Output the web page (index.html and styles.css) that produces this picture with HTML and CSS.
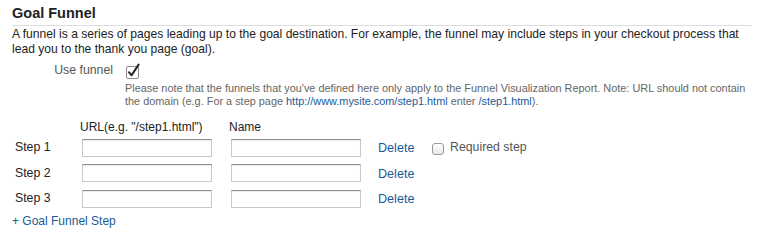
FILE: index.html
```html
<!DOCTYPE html>
<html>
<head>
<meta charset="utf-8">
<link rel="stylesheet" href="styles.css">
</head>
<body>
<div class="panel">
  <h2 class="title">Goal Funnel</h2>
  <p class="desc">A funnel is a series of pages leading up to the goal destination. For example, the funnel may include steps in your checkout process that lead you to the thank you page (goal).</p>
  <div class="use-row">
    <span class="use-label">Use funnel</span>
    <span class="check">
      <svg width="15" height="16" viewBox="0 0 15 16">
        <rect x="0.5" y="3.5" width="12" height="12" rx="1.5" fill="#fff" stroke="#8a8a8a"/>
        <path d="M3 9.2 L5.6 12.3 L12.6 1.6" fill="none" stroke="#222" stroke-width="2" stroke-linecap="round" stroke-linejoin="round"/>
      </svg>
    </span>
  </div>
  <p class="note">Please note that the funnels that you've defined here only apply to the Funnel Visualization Report. Note: URL should not contain the domain (e.g. For a step page <a>http://www.mysite.com/step1.html</a> enter <a>/step1.html</a>).</p>
  <div class="steps">
    <span></span><span class="colhead">URL(e.g. "/step1.html")</span><span class="colhead">Name</span><span></span><span></span>
    <span class="slabel">Step 1</span><span class="inp"></span><span class="inp"></span><a class="del">Delete</a>
    <span class="req"><span class="rbox"></span>Required step</span>
    <span class="slabel">Step 2</span><span class="inp"></span><span class="inp"></span><a class="del">Delete</a><span></span>
    <span class="slabel">Step 3</span><span class="inp"></span><span class="inp"></span><a class="del">Delete</a><span></span>
  </div>
  <a class="add">+ Goal Funnel Step</a>
</div>
</body>
</html>
```
FILE: styles.css
```css
html, body {
  margin: 0;
  background: #fff;
}
body {
  font-family: "Liberation Sans", Arial, sans-serif;
  color: #222;
}
.panel {
  padding: 4px 12px 0 12px;
}
.title {
  margin: 0;
  font-size: 14.5px;
  font-weight: bold;
  line-height: 18px;
  padding-bottom: 3px;
  border-bottom: 1px solid #ddd;
  width: 740px;
}
.desc {
  margin: 0;
  font-size: 12.1px;
  line-height: 15px;
  padding-top: 1px;
}
.use-row {
  display: flex;
  align-items: flex-end;
  margin-top: 5px;
}
.use-label {
  width: 101px;
  text-align: right;
  font-size: 12.3px;
  color: #555;
  line-height: 16px;
  padding-bottom: 1px;
}
.check {
  margin-left: 13px;
  display: flex;
}
.note {
  margin: 3px 0 0 113px;
  font-size: 10.9px;
  line-height: 13px;
  color: #666;
}
.note a {
  color: #1a5a96;
}
.steps {
  display: grid;
  grid-template-columns: 70px 149px 147px 54px auto;
  grid-template-rows: 15px 18px 18px 18px;
  row-gap: 7.5px;
  align-items: center;
  margin-top: 8px;
}
.colhead {
  align-self: start;
  margin-top: 4px;
  font-size: 12px;
  color: #222;
  line-height: 15px;
  white-space: nowrap;
  margin-left: -2px;
}
.slabel {
  font-size: 12.3px;
  line-height: 15px;
  margin-left: 3px;
  grid-column: 1;
}
.inp {
  display: block;
  width: 130px;
  height: 18px;
  box-sizing: border-box;
  border: 1px solid #c8c8c8;
  border-top-color: #8f8f8f;
  box-shadow: inset 0 1px 1px rgba(0,0,0,0.08);
  background: #fff;
}
.del {
  font-size: 12.6px;
  color: #1a5a96;
  line-height: 15px;
  margin-top: 2px;
}
.req {
  display: flex;
  align-items: center;
  font-size: 12.3px;
  color: #555;
  line-height: 15px;
  white-space: nowrap;
}
.rbox {
  display: inline-block;
  width: 10px;
  height: 10px;
  border: 1px solid #9a9a9a;
  border-radius: 3px;
  background: linear-gradient(#fff, #e8e8e8);
  margin-right: 6px;
  margin-top: 2px;
}
.add {
  display: block;
  margin-top: 6px;
  font-size: 12px;
  color: #1a5a96;
  line-height: 15px;
}
```
